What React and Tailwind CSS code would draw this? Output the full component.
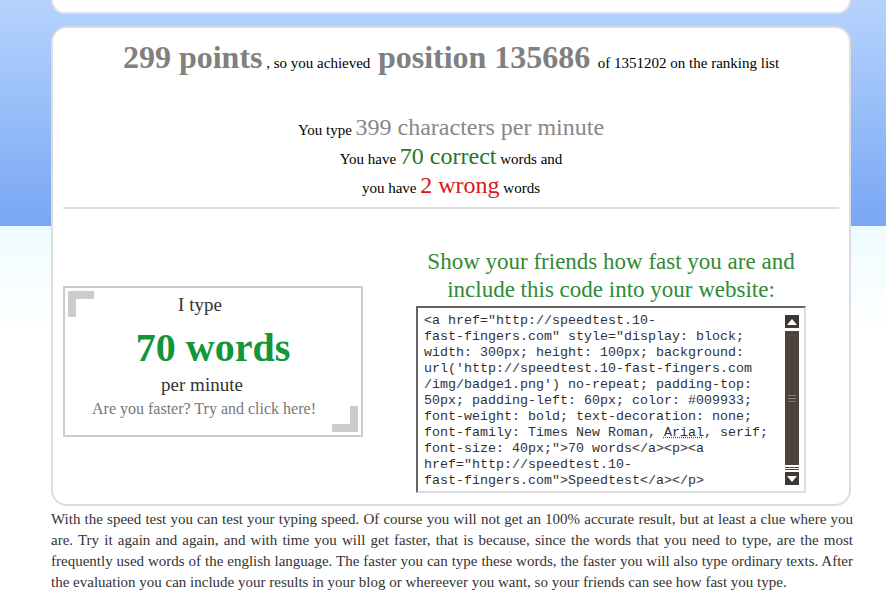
const codeLines = [
  '<a href="http://speedtest.10-',
  'fast-fingers.com" style="display: block;',
  'width: 300px; height: 100px; background:',
  "url('http://speedtest.10-fast-fingers.com",
  "/img/badge1.png') no-repeat; padding-top:",
  '50px; padding-left: 60px; color: #009933;',
  'font-weight: bold; text-decoration: none;',
  null,
  'font-size: 40px;">70 words</a><p><a',
  'href="http://speedtest.10-',
  'fast-fingers.com">Speedtest</a></p>',
];

const Scrollbar = () => (
  <div className="absolute right-[5px] top-[7px] bottom-[6px] w-[14px] flex flex-col">
    <div className="h-[13px] bg-[#3f3832] flex items-center justify-center">
      <svg width="10" height="6" viewBox="0 0 10 6"><path d="M0 6 L5 0 L10 6 Z" fill="#fff" /></svg>
    </div>
    <div className="flex-1 mt-[3px] bg-[#4c4339] flex flex-col items-center justify-center gap-[2px]">
      <div className="w-[8px] h-[1px] bg-[#8a7e70]" />
      <div className="w-[8px] h-[1px] bg-[#8a7e70]" />
      <div className="w-[8px] h-[1px] bg-[#8a7e70]" />
    </div>
    <div className="h-[1px] mt-[2px] bg-[#4c4339]" />
    <div className="h-[1px] mt-[1px] bg-[#4c4339]" />
    <div className="h-[13px] mt-[2px] bg-[#3f3832] flex items-center justify-center">
      <svg width="10" height="6" viewBox="0 0 10 6"><path d="M0 0 L10 0 L5 6 Z" fill="#fff" /></svg>
    </div>
  </div>
);

const Badge = () => (
  <div className="relative w-[300px] h-[151px] mt-[77px] border-2 border-[#cccccc] bg-white text-center font-['Liberation_Serif',serif]">
    <div className="absolute left-[3px] top-[3px] w-[26px] h-[26px] border-l-[8px] border-t-[8px] border-[#cccccc]" />
    <div className="absolute right-[3px] bottom-[3px] w-[26px] h-[26px] border-r-[8px] border-b-[8px] border-[#cccccc]" />
    <div className="pt-[5px] pr-[26px] text-[19px] leading-[24px] text-[#333]">I type</div>
    <div className="mt-[10px] text-[40px] leading-[42px] font-bold text-[#12963a]">70 words</div>
    <div className="mt-[4px] pr-[22px] text-[19px] leading-[24px] text-[#333]">per minute</div>
    <div className="mt-[2px] pr-[18px] text-[16px] leading-[20px] text-[#777]">Are you faster? Try and click here!</div>
  </div>
);

export default function App() {
  return (
    <div className="min-h-[595px] w-full bg-[linear-gradient(to_bottom,#b6d3fd_0px,#79a7f4_226px,#eefbff_226px,#ffffff_330px)] font-['Liberation_Serif',serif]">
      <div className="ml-[51px] w-[800px]">
        <div className="h-[14px] bg-white border-2 border-t-0 border-[#dde3ea] rounded-b-[14px]" />

        <div className="mt-[12px] h-[480px] bg-white border-2 border-[#dddddd] rounded-[16px] px-[10px]">
          <div className="pt-[13px] text-center text-black leading-[40px]">
            <span className="text-[32px] leading-[32px] font-bold text-[#808080]">299 points</span>
            <span className="text-[15px]">&nbsp;, so you achieved&nbsp; </span>
            <span className="text-[32px] leading-[32px] font-bold text-[#808080]">position 135686</span>
            <span className="text-[15px]"> &nbsp;of 1351202 on the ranking list</span>
          </div>

          <div className="mt-[32px] text-center text-[15px] leading-[28px] text-black">
            <div>
              You type <span className="text-[24px] leading-[24px] text-[#888888]">399 characters per minute</span>
            </div>
            <div>
              You have <span className="text-[24px] leading-[24px] text-[#22772a]">70 correct</span> words and
            </div>
            <div>
              you have <span className="text-[24px] leading-[24px] text-[#dd1515]">2 wrong</span> words
            </div>
          </div>

          <div className="mt-[5px] h-[2px] bg-[#dddddd]" />

          <div className="flex">
            <Badge />
            <div className="ml-[53px] w-[390px]">
              <div className="mt-[39px] text-center text-[23px] leading-[28px] text-[#2f8a34]">
                Show your friends how fast you are and include this code into your website:
              </div>
              <div className="relative mt-[2px] h-[187px] bg-white border-2 border-t-[#666] border-l-[#666] border-r-[#ddd] border-b-[#ddd]">
                <div className="pl-[6px] pt-[5px] font-['Liberation_Mono',monospace] text-[13.33px] leading-[16px] text-[#333] whitespace-pre">
                  {codeLines.map((l, i) =>
                    l === null ? (
                      <div key={i}>
                        font-family: Times New Roman,{" "}
                        <span className="underline decoration-dotted decoration-[#d02020]">Arial</span>, serif;
                      </div>
                    ) : (
                      <div key={i}>{l}</div>
                    )
                  )}
                </div>
                <Scrollbar />
              </div>
            </div>
          </div>
        </div>

        <p className="mt-[3px] text-[15px] leading-[21px] text-[#333] text-justify w-[802px]">
          With the speed test you can test your typing speed. Of course you will not get an 100% accurate result, but at least a clue where you are. Try it again and again, and with time you will get faster, that is because, since the words that you need to type, are the most frequently used words of the english language. The faster you can type these words, the faster you will also type ordinary texts. After the evaluation you can include your results in your blog or whereever you want, so your friends can see how fast you type.
        </p>
      </div>
    </div>
  );
}
